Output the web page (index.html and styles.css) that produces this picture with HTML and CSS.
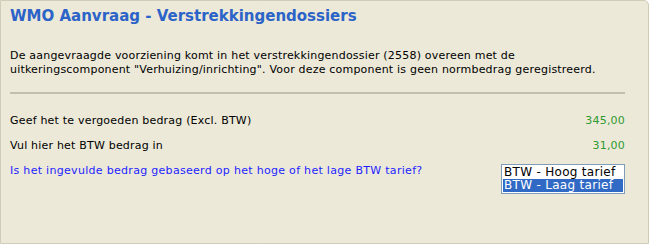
FILE: index.html
```html
<!DOCTYPE html>
<html lang="nl">
<head>
<meta charset="utf-8">
<title>WMO Aanvraag - Verstrekkingendossiers</title>
<link rel="stylesheet" href="styles.css">
</head>
<body>
<div class="panel">
  <h1 class="title">WMO Aanvraag - Verstrekkingendossiers</h1>
  <p class="intro">De aangevraagde voorziening komt in het verstrekkingendossier (2558) overeen met de<br>uitkeringscomponent "Verhuizing/inrichting". Voor deze component is geen normbedrag geregistreerd.</p>
  <div class="rule"></div>
  <div class="row row-first">
    <span class="label">Geef het te vergoeden bedrag (Excl. BTW)</span>
    <span class="value">345,00</span>
  </div>
  <div class="row row-second">
    <span class="label">Vul hier het BTW bedrag in</span>
    <span class="value">31,00</span>
  </div>
  <div class="row row-question">
    <span class="question">Is het ingevulde bedrag gebaseerd op het hoge of het lage BTW tarief?</span>
    <div class="listbox">
      <div class="option">BTW - Hoog tarief</div>
      <div class="option selected">BTW - Laag tarief</div>
    </div>
  </div>
</div>
</body>
</html>
```

FILE: styles.css
```css
html, body {
  margin: 0;
  padding: 0;
  background: #ffffff;
}

body {
  font-family: "DejaVu Sans", "Liberation Sans", sans-serif;
  font-size: 11px;
  letter-spacing: 0.2px;
  color: #000000;
}

.panel {
  box-sizing: border-box;
  width: 649px;
  height: 244px;
  background: #ece9d8;
  border: 1px solid #d0ccb8;
  border-top-right-radius: 5px;
  padding: 0 0 0 9px;
}

.title {
  margin: 0;
  padding-top: 5px;
  font-size: 15px;
  font-weight: bold;
  letter-spacing: 0;
  line-height: 20px;
  color: #2b63c8;
}

.intro {
  margin: 23px 0 0 0;
  line-height: 14px;
}

.rule {
  width: 615px;
  height: 0;
  border-top: 2px solid #c2bfb0;
  margin-top: 15px;
}

.row {
  width: 615px;
  display: flex;
  justify-content: space-between;
  align-items: flex-start;
  line-height: 14px;
}

.row-first {
  margin-top: 20px;
}

.row-second {
  margin-top: 11px;
}

.row-question {
  margin-top: 11px;
}

.value {
  color: #2f9a2f;
}

.question {
  color: #1e1eff;
  letter-spacing: 0.3px;
}

.listbox {
  box-sizing: border-box;
  width: 124px;
  margin-top: 0;
  border: 1px solid #7f9db9;
  padding: 1px;
  background: #ffffff;
  font-size: 12px;
  letter-spacing: 0.3px;
}

.option {
  height: 13px;
  line-height: 13px;
  padding-left: 1px;
  white-space: nowrap;
}

.option.selected {
  background: #316ac5;
  color: #ffffff;
}
```
